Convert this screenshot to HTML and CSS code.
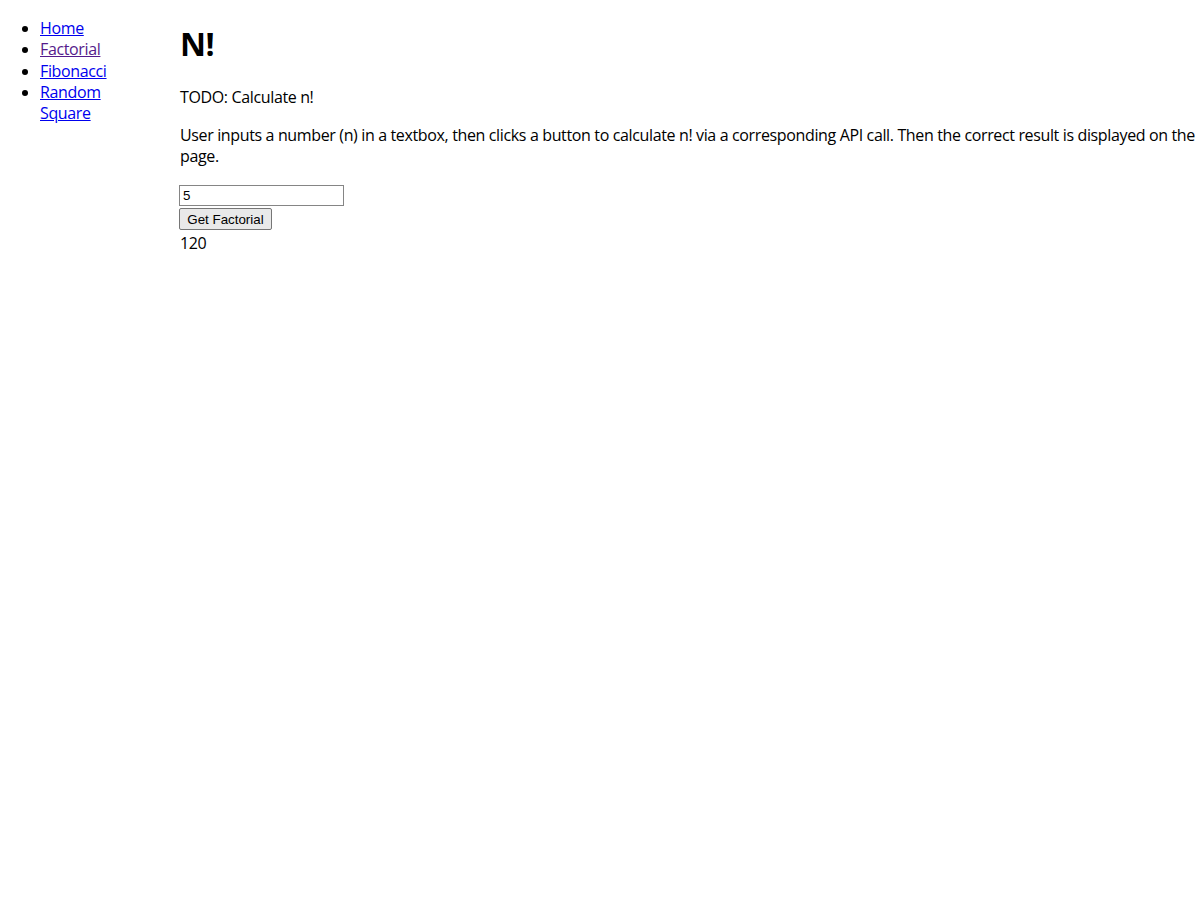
FILE: index.html
```html
<!DOCTYPE html>
<html lang="en">
<head>
<meta charset="utf-8">
<title>N!</title>
<link rel="stylesheet" href="styles.css">
</head>
<body>
<div class="layout">
  <nav class="sidebar">
    <ul class="nav-list">
      <li><a href="#" class="nav-link">Home</a></li>
      <li><a href="#" class="nav-link visited">Factorial</a></li>
      <li><a href="#" class="nav-link">Fibonacci</a></li>
      <li><a href="#" class="nav-link">Random Square</a></li>
    </ul>
  </nav>
  <main class="content">
    <h1 class="title">N!</h1>
    <p class="para">TODO: Calculate n!</p>
    <p class="para">User inputs a number (n) in a textbox, then clicks a button to calculate n! via a corresponding API call. Then the correct result is displayed on the page.</p>
    <div class="field-row"><input class="num-input" type="text" value="5"></div>
    <div class="field-row"><button class="calc-btn" type="button">Get Factorial</button></div>
    <div class="result">120</div>
  </main>
</div>
</body>
</html>
```

FILE: styles.css
```css
html, body {
  margin: 0;
  padding: 0;
  background: #ffffff;
}

body {
  font-family: "Open Sans", "Noto Sans", sans-serif;
  font-size: 16px;
  letter-spacing: -0.36px;
  color: #000000;
  line-height: 21.3px;
}

.layout {
  display: grid;
  grid-template-columns: 150px 1fr;
  column-gap: 30px;
  padding-top: 2px;
}

.nav-list {
  margin: 16px 0;
  padding-left: 40px;
}

.nav-link {
  color: #0000ee;
}

.nav-link.visited {
  color: #551a8b;
}

.content {
  min-width: 0;
}

.title {
  font-size: 32px;
  font-weight: bold;
  letter-spacing: -0.6px;
  line-height: 42.5px;
  margin: 21.4px 0;
}

.para {
  margin: 16px 0;
}

.field-row {
  display: flex;
  padding-top: 2px;
}

.num-input {
  font-family: "Liberation Sans", Arial, sans-serif;
  font-size: 13.33px;
  letter-spacing: 0;
  width: 165px;
  height: 21px;
  box-sizing: border-box;
  margin: 0 0 0 -1px;
  padding: 1px 3px;
  border: 1px solid #858585;
  background: #ffffff;
  color: #000000;
}

.calc-btn {
  font-family: "Liberation Sans", Arial, sans-serif;
  font-size: 13.33px;
  letter-spacing: 0;
  width: 93px;
  height: 22px;
  box-sizing: border-box;
  margin: 0 0 0 -1px;
  padding: 1px 6px;
  border: 1px solid #767676;
  border-radius: 2px;
  background: #e9e9e9;
  color: #000000;
}

.result {
  padding-top: 3px;
  line-height: 21.3px;
}
```
